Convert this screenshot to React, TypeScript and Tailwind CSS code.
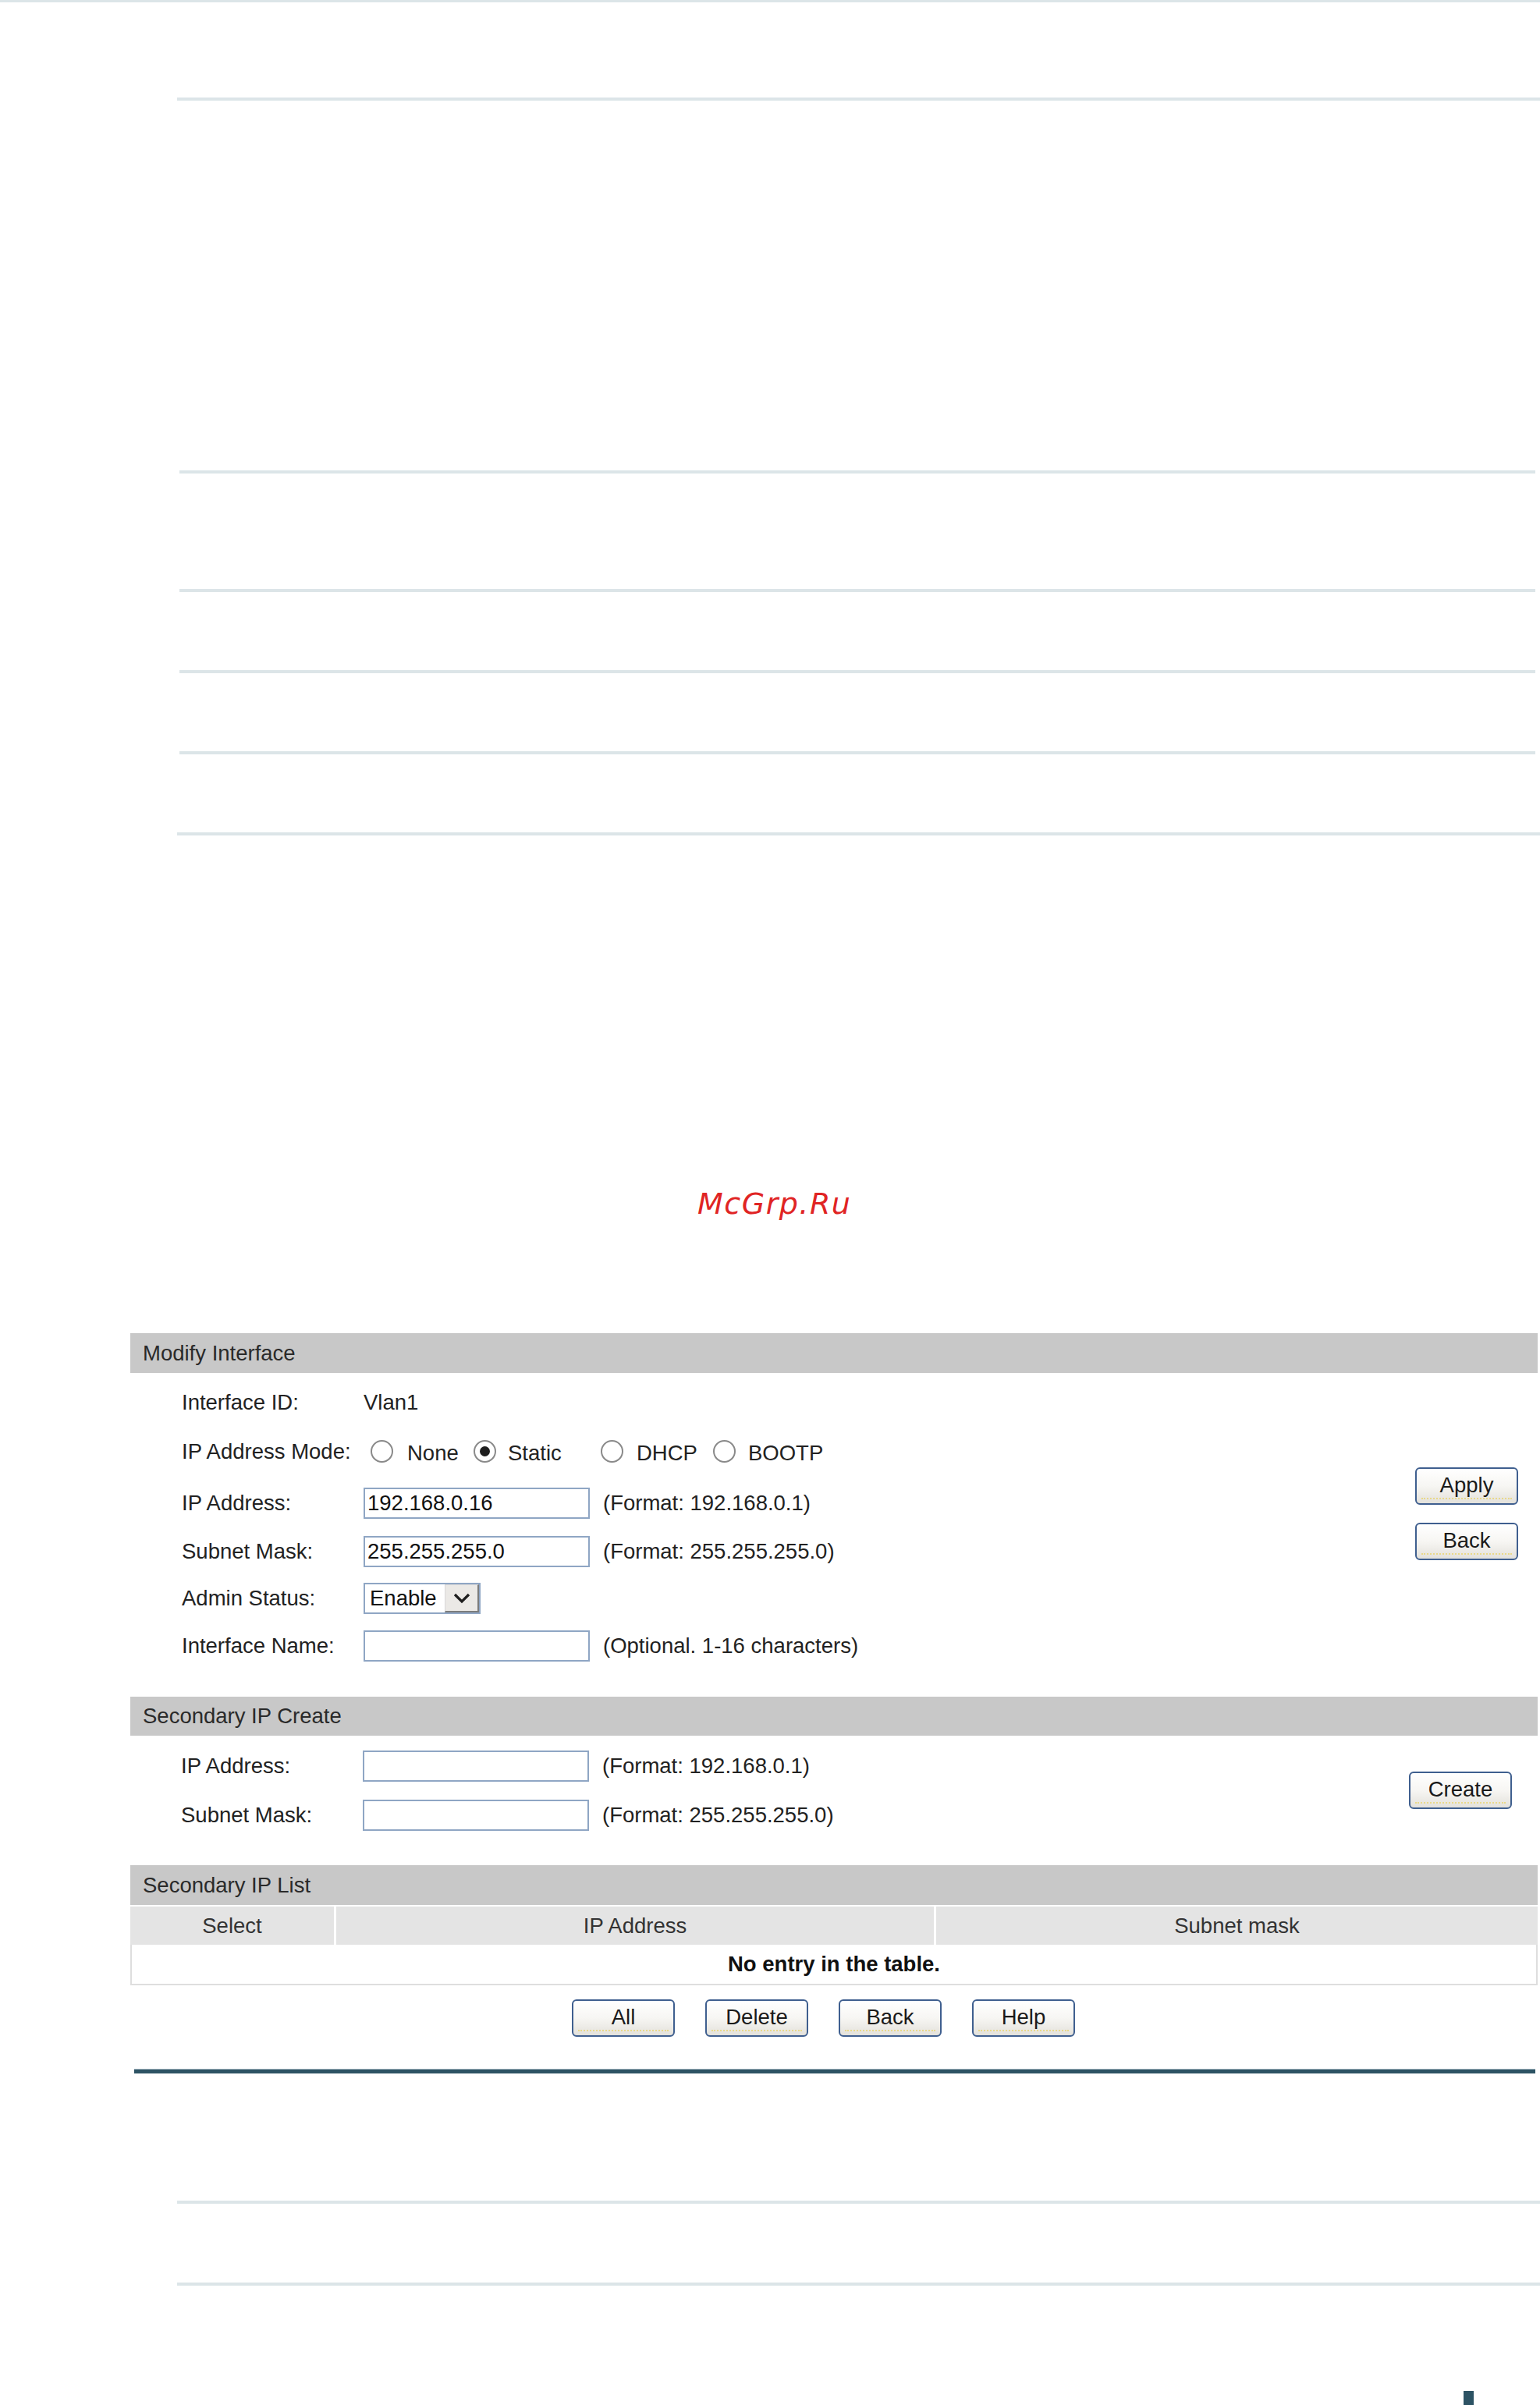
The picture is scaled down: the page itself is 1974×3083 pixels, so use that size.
import React from "react";

const Line = ({ cls }: { cls: string }) => <div className={`h-[4px] bg-[#dce5e8] ${cls}`} />;

const Btn = ({ label }: { label: string }) => (
  <div className="relative flex h-[48px] w-[132px] items-center justify-center rounded-[6px] border-2 border-[#3f5f8f] bg-linear-to-b from-white via-[#f7f6f3] to-[#e3e1db] text-[27.5px] text-[#1a1a1a]">
    <span className="relative -mt-[2px]">{label}</span>
    <div className="absolute bottom-[5px] left-[6px] right-[6px] border-b-2 border-dotted border-[#e9d98a]" />
  </div>
);

const Input = ({ value }: { value?: string }) => (
  <div className="h-[40px] w-[290px] border-2 border-[#8fa6c4] bg-white pl-[3px] text-[27.5px] leading-[35px] text-[#111]">
    {value}
  </div>
);

const Radio = ({ checked }: { checked?: boolean }) => (
  <div className="flex h-[29px] w-[29px] shrink-0 items-center justify-center rounded-full border-2 border-[#8a8a8a] bg-white">
    {checked && <div className="h-[13px] w-[13px] rounded-full bg-[#1e1e1e]" />}
  </div>
);

const Label = ({ children }: { children: React.ReactNode }) => (
  <div className="w-[233px] shrink-0">{children}</div>
);

const Header = ({ title, h }: { title: string; h: string }) => (
  <div className={`flex items-center bg-[#c8c8c8] pl-[16px] text-[27.5px] text-[#2a2a2a] ${h}`}>{title}</div>
);

export default function App() {
  return (
    <div className="relative w-[1974px] bg-white font-['Liberation_Sans',Arial,sans-serif] text-[27.5px] text-[#222]">
      <div className="h-[3px] w-full bg-[#dce5e8]" />
      <Line cls="mt-[122px] ml-[227px]" />
      <Line cls="mt-[474px] ml-[230px] mr-[6px]" />
      <Line cls="mt-[148px] ml-[230px] mr-[6px]" />
      <Line cls="mt-[100px] ml-[230px] mr-[6px]" />
      <Line cls="mt-[100px] ml-[230px] mr-[6px]" />
      <Line cls="mt-[100px] ml-[227px]" />

      <div className="mt-[453px] ml-[894px] h-[38px] font-['DejaVu_Sans',sans-serif] text-[38px] italic leading-[38px] tracking-[1.5px] text-[#e02424]">
        McGrp.Ru
      </div>

      <div className="mt-[147px] ml-[167px] w-[1804px]">
        <Header title="Modify Interface" h="h-[51px]" />
        <div className="flex">
          <div className="flex flex-1 flex-col pt-[6px] pl-[66px]">
            <div className="flex h-[63px] items-center">
              <Label>Interface ID:</Label>
              <div>Vlan1</div>
            </div>
            <div className="flex h-[63px] items-center">
              <Label>IP Address Mode:</Label>
              <div className="ml-[9px] flex w-[132px] items-center gap-[18px]">
                <Radio />
                <span className="mt-[5px]">None</span>
              </div>
              <div className="flex w-[163px] items-center gap-[15px]">
                <Radio checked />
                <span className="mt-[5px]">Static</span>
              </div>
              <div className="flex w-[144px] items-center gap-[17px]">
                <Radio />
                <span className="mt-[5px]">DHCP</span>
              </div>
              <div className="flex items-center gap-[16px]">
                <Radio />
                <span className="mt-[5px]">BOOTP</span>
              </div>
            </div>
            <div className="flex h-[70px] items-center">
              <Label>IP Address:</Label>
              <Input value="192.168.0.16" />
              <div className="ml-[17px]">(Format: 192.168.0.1)</div>
            </div>
            <div className="flex h-[54px] items-center">
              <Label>Subnet Mask:</Label>
              <Input value="255.255.255.0" />
              <div className="ml-[17px]">(Format: 255.255.255.0)</div>
            </div>
            <div className="flex h-[66px] items-center">
              <Label>Admin Status:</Label>
              <div className="flex h-[40px] w-[150px] border-2 border-[#8fa6c4] bg-white">
                <div className="flex-1 pl-[6px] leading-[35px] text-[#111]">Enable</div>
                <div className="flex w-[44px] items-center justify-center border-l border-t border-[#d8d8d8] border-r-2 border-b-2 border-r-[#7c7c7c] border-b-[#7c7c7c] bg-[#ebe9e6]">
                  <svg width="22" height="14" viewBox="0 0 22 14">
                    <path d="M2 2 L11 11 L20 2" fill="none" stroke="#1e1e1e" strokeWidth="3.2" />
                  </svg>
                </div>
              </div>
            </div>
            <div className="flex h-[56px] items-center">
              <Label>Interface Name:</Label>
              <Input />
              <div className="ml-[17px]">(Optional. 1-16 characters)</div>
            </div>
            <div className="h-[37px]" />
          </div>
          <div className="mr-[25px] flex w-[132px] flex-col gap-[23px] pt-[121px]">
            <Btn label="Apply" />
            <Btn label="Back" />
          </div>
        </div>

        <Header title="Secondary IP Create" h="h-[50px]" />
        <div className="flex">
          <div className="flex flex-1 flex-col pt-[8px] pl-[65px]">
            <div className="flex h-[62px] items-center">
              <Label>IP Address:</Label>
              <Input />
              <div className="ml-[17px]">(Format: 192.168.0.1)</div>
            </div>
            <div className="flex h-[63px] items-center">
              <Label>Subnet Mask:</Label>
              <Input />
              <div className="ml-[17px]">(Format: 255.255.255.0)</div>
            </div>
            <div className="h-[33px]" />
          </div>
          <div className="mr-[33px] flex w-[132px] flex-col pt-[46px]">
            <Btn label="Create" />
          </div>
        </div>

        <Header title="Secondary IP List" h="h-[51px]" />
        <div className="mt-[2px] flex h-[49px] gap-[3px] bg-white text-[#333]">
          <div className="flex w-[261px] items-center justify-center bg-[#e4e4e4]">Select</div>
          <div className="flex w-[766px] items-center justify-center bg-[#e4e4e4]">IP Address</div>
          <div className="flex flex-1 items-center justify-center bg-[#e4e4e4]">Subnet mask</div>
        </div>
        <div className="flex h-[52px] items-center justify-center border-x-2 border-b-2 border-[#dedede] font-bold text-[#111]">
          No entry in the table.
        </div>
        <div className="mt-[18px] ml-[566px] flex gap-[39px]">
          <Btn label="All" />
          <Btn label="Delete" />
          <Btn label="Back" />
          <Btn label="Help" />
        </div>
      </div>

      <div className="mt-[41px] ml-[172px] h-[6px] w-[1796px] border-t border-[#9fb3bd] bg-[#2d5364]" />
      <Line cls="mt-[163px] ml-[227px]" />
      <Line cls="mt-[101px] ml-[227px]" />
      <div className="mt-[135px] ml-[1876px] h-[18px] w-[13px] bg-[#2d5364]" />
    </div>
  );
}
